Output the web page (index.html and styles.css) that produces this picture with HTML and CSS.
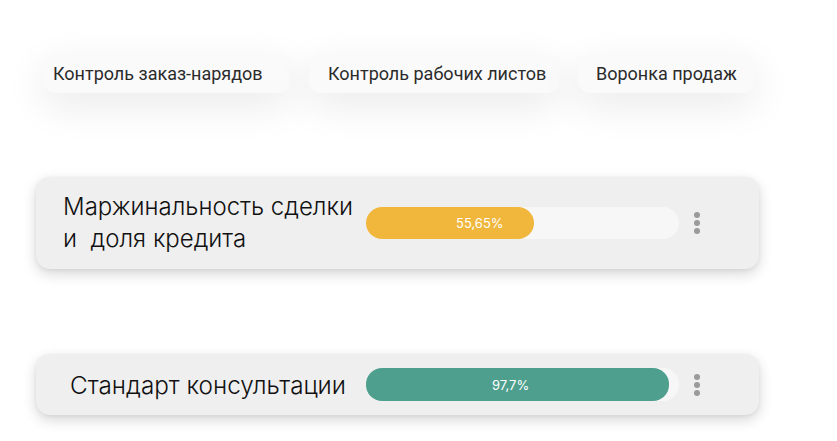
FILE: index.html
```html
<!DOCTYPE html>
<html lang="ru">
<head>
<meta charset="utf-8">
<link rel="stylesheet" href="styles.css">
</head>
<body>
<div class="page">
  <nav class="tabs">
    <div class="tab tab-first">Контроль заказ-нарядов</div>
    <div class="tab tab-second">Контроль рабочих листов</div>
    <div class="tab">Воронка продаж</div>
  </nav>

  <div class="card">
    <div class="title-col"><div class="title">Маржинальность сделки<br>и&nbsp; доля кредита</div></div>
    <div class="track"><div class="fill fill-yellow" style="width:168px"><span class="pct pct-a">55,65%</span></div></div>
    <div class="dots"><i></i><i></i><i></i></div>
  </div>

  <div class="card card-second">
    <div class="title-col"><div class="title">Стандарт консультации</div></div>
    <div class="track track-tall"><div class="fill fill-green" style="width:303px"><span class="pct pct-b">97,7%</span></div></div>
    <div class="dots"><i></i><i></i><i></i></div>
  </div>
</div>
</body>
</html>
```

FILE: styles.css
```css
* { box-sizing: border-box; }
html, body { margin: 0; padding: 0; background: #ffffff; }
body { width: 837px; height: 441px; overflow: hidden; font-family: Inter, Roboto, "Liberation Sans", sans-serif; }

.page { padding: 54px 0 0 36px; display: flex; flex-direction: column; }

.tabs { display: flex; gap: 18px; padding-left: 7px; }
.tab {
  height: 39px;
  display: flex; align-items: center; justify-content: center;
  padding: 0 18px;
  background: #fafafa;
  border-radius: 12px;
  font-family: Roboto, "Liberation Sans", sans-serif;
  font-size: 18px;
  color: #2b2b2b;
  box-shadow: 0 12px 40px rgba(0,0,0,0.09);
  white-space: nowrap;
}
.tab-first { width: 248px; justify-content: flex-start; padding-left: 10px; }
.tab-second { width: 251px; justify-content: flex-start; padding-left: 19px; }

.card {
  margin-top: 84px;
  width: 723px;
  display: flex; align-items: center;
  padding: 14px 0 14px 20px;
  background: #efefef;
  border-radius: 14px;
  box-shadow: 0 5px 14px rgba(0,0,0,0.16), 0 1px 4px rgba(0,0,0,0.06);
}
.card-second { margin-top: 85px; }

.title-col { width: 304px; display: flex; justify-content: center; }
.title { font-size: 24px; font-weight: 300; line-height: 32px; color: #111; white-space: nowrap; }
.card-second .title { font-size: 24.3px; }

.track {
  margin-left: 6px;
  width: 313px; height: 32px;
  background: #f7f7f7;
  border-radius: 16px;
  display: flex;
}
.track-tall { height: 33px; }
.fill {
  height: 100%;
  border-radius: 16px;
  display: flex; align-items: center;
  color: #fff; font-size: 13px;
}
.fill-yellow { background: #f0b73c; }
.fill-green { background: #4e9f8e; }
.pct-a { margin-left: 90px; }
.pct-b { margin-left: 126px; }

.dots { margin-left: 15px; display: flex; flex-direction: column; gap: 2px; }
.dots i { display: block; width: 6px; height: 6px; border-radius: 50%; background: #9a9a9a; }
```
